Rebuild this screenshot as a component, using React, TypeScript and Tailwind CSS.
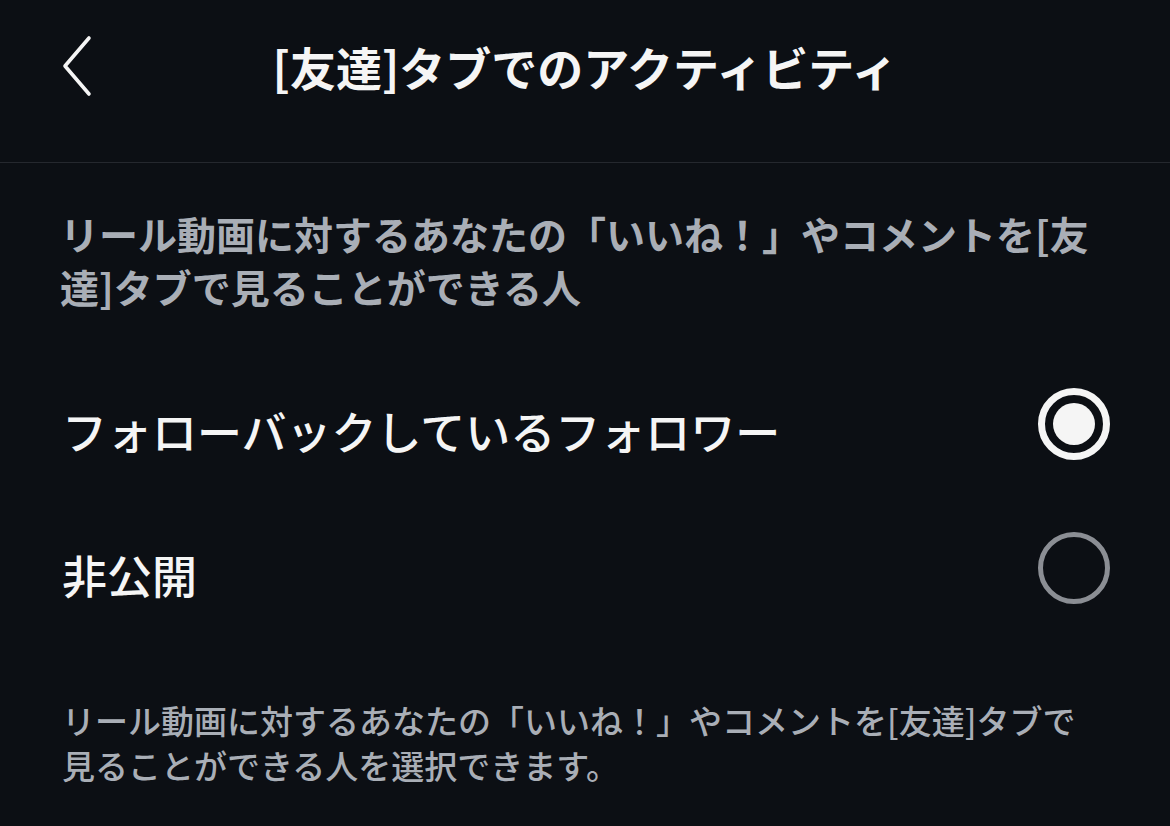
const font = { fontFamily: '"Noto Sans CJK JP", "Noto Sans", sans-serif' };

function Radio({ checked }: { checked: boolean }) {
  if (checked) {
    return (
      <span className="flex h-[72px] w-[72px] shrink-0 items-center justify-center rounded-full border-[7px] border-[#f5f5f5]">
        <span className="h-[42px] w-[42px] rounded-full bg-[#f5f5f5]" />
      </span>
    );
  }
  return <span className="h-[72px] w-[72px] shrink-0 rounded-full border-[5px] border-[#8b8e94]" />;
}

const options = [
  { label: "フォローバックしているフォロワー", checked: true },
  { label: "非公開", checked: false },
];

export default function App() {
  return (
    <div
      className="min-h-screen w-full bg-[#0c0f14] text-white antialiased"
      style={font}
    >
      <header className="grid h-[163px] grid-cols-[1fr_auto_1fr] items-start border-b border-[#25282e] px-[62px] pt-[35px]">
        <button className="flex h-[62px] w-[40px] items-center">
          <svg width="32" height="62" viewBox="0 0 32 62" fill="none">
            <path
              d="M27 3 L3 31 L27 59"
              stroke="#f5f5f5"
              strokeWidth="3.6"
              strokeLinecap="round"
              strokeLinejoin="round"
            />
          </svg>
        </button>
        <h1 className="text-[46px] leading-[62px] font-bold text-[#f5f5f5]">
          [友達]タブでのアクティビティ
        </h1>
        <div />
      </header>

      <p className="mt-[44px] pl-[60px] pr-[40px] text-[39px] leading-[53px] font-bold text-[#a9aeb6]">
        リール動画に対するあなたの「いいね！」やコメントを[友
        <br />
        達]タブで見ることができる人
      </p>

      <div className="mt-[39px] flex flex-col pl-[62px] pr-[60px]">
        {options.map((o) => (
          <label
            key={o.label}
            className="flex h-[144px] items-center justify-between"
          >
            <span className="pt-[14px] text-[45px] leading-[60px] font-medium text-[#f5f5f5]">
              {o.label}
            </span>
            <Radio checked={o.checked} />
          </label>
        ))}
      </div>

      <p className="mt-[58px] px-[62px] text-[33px] leading-[45px] font-medium text-[#a9aeb6]">
        リール動画に対するあなたの「いいね！」やコメントを[友達]タブで
        <br />
        見ることができる人を選択できます。
      </p>
    </div>
  );
}
